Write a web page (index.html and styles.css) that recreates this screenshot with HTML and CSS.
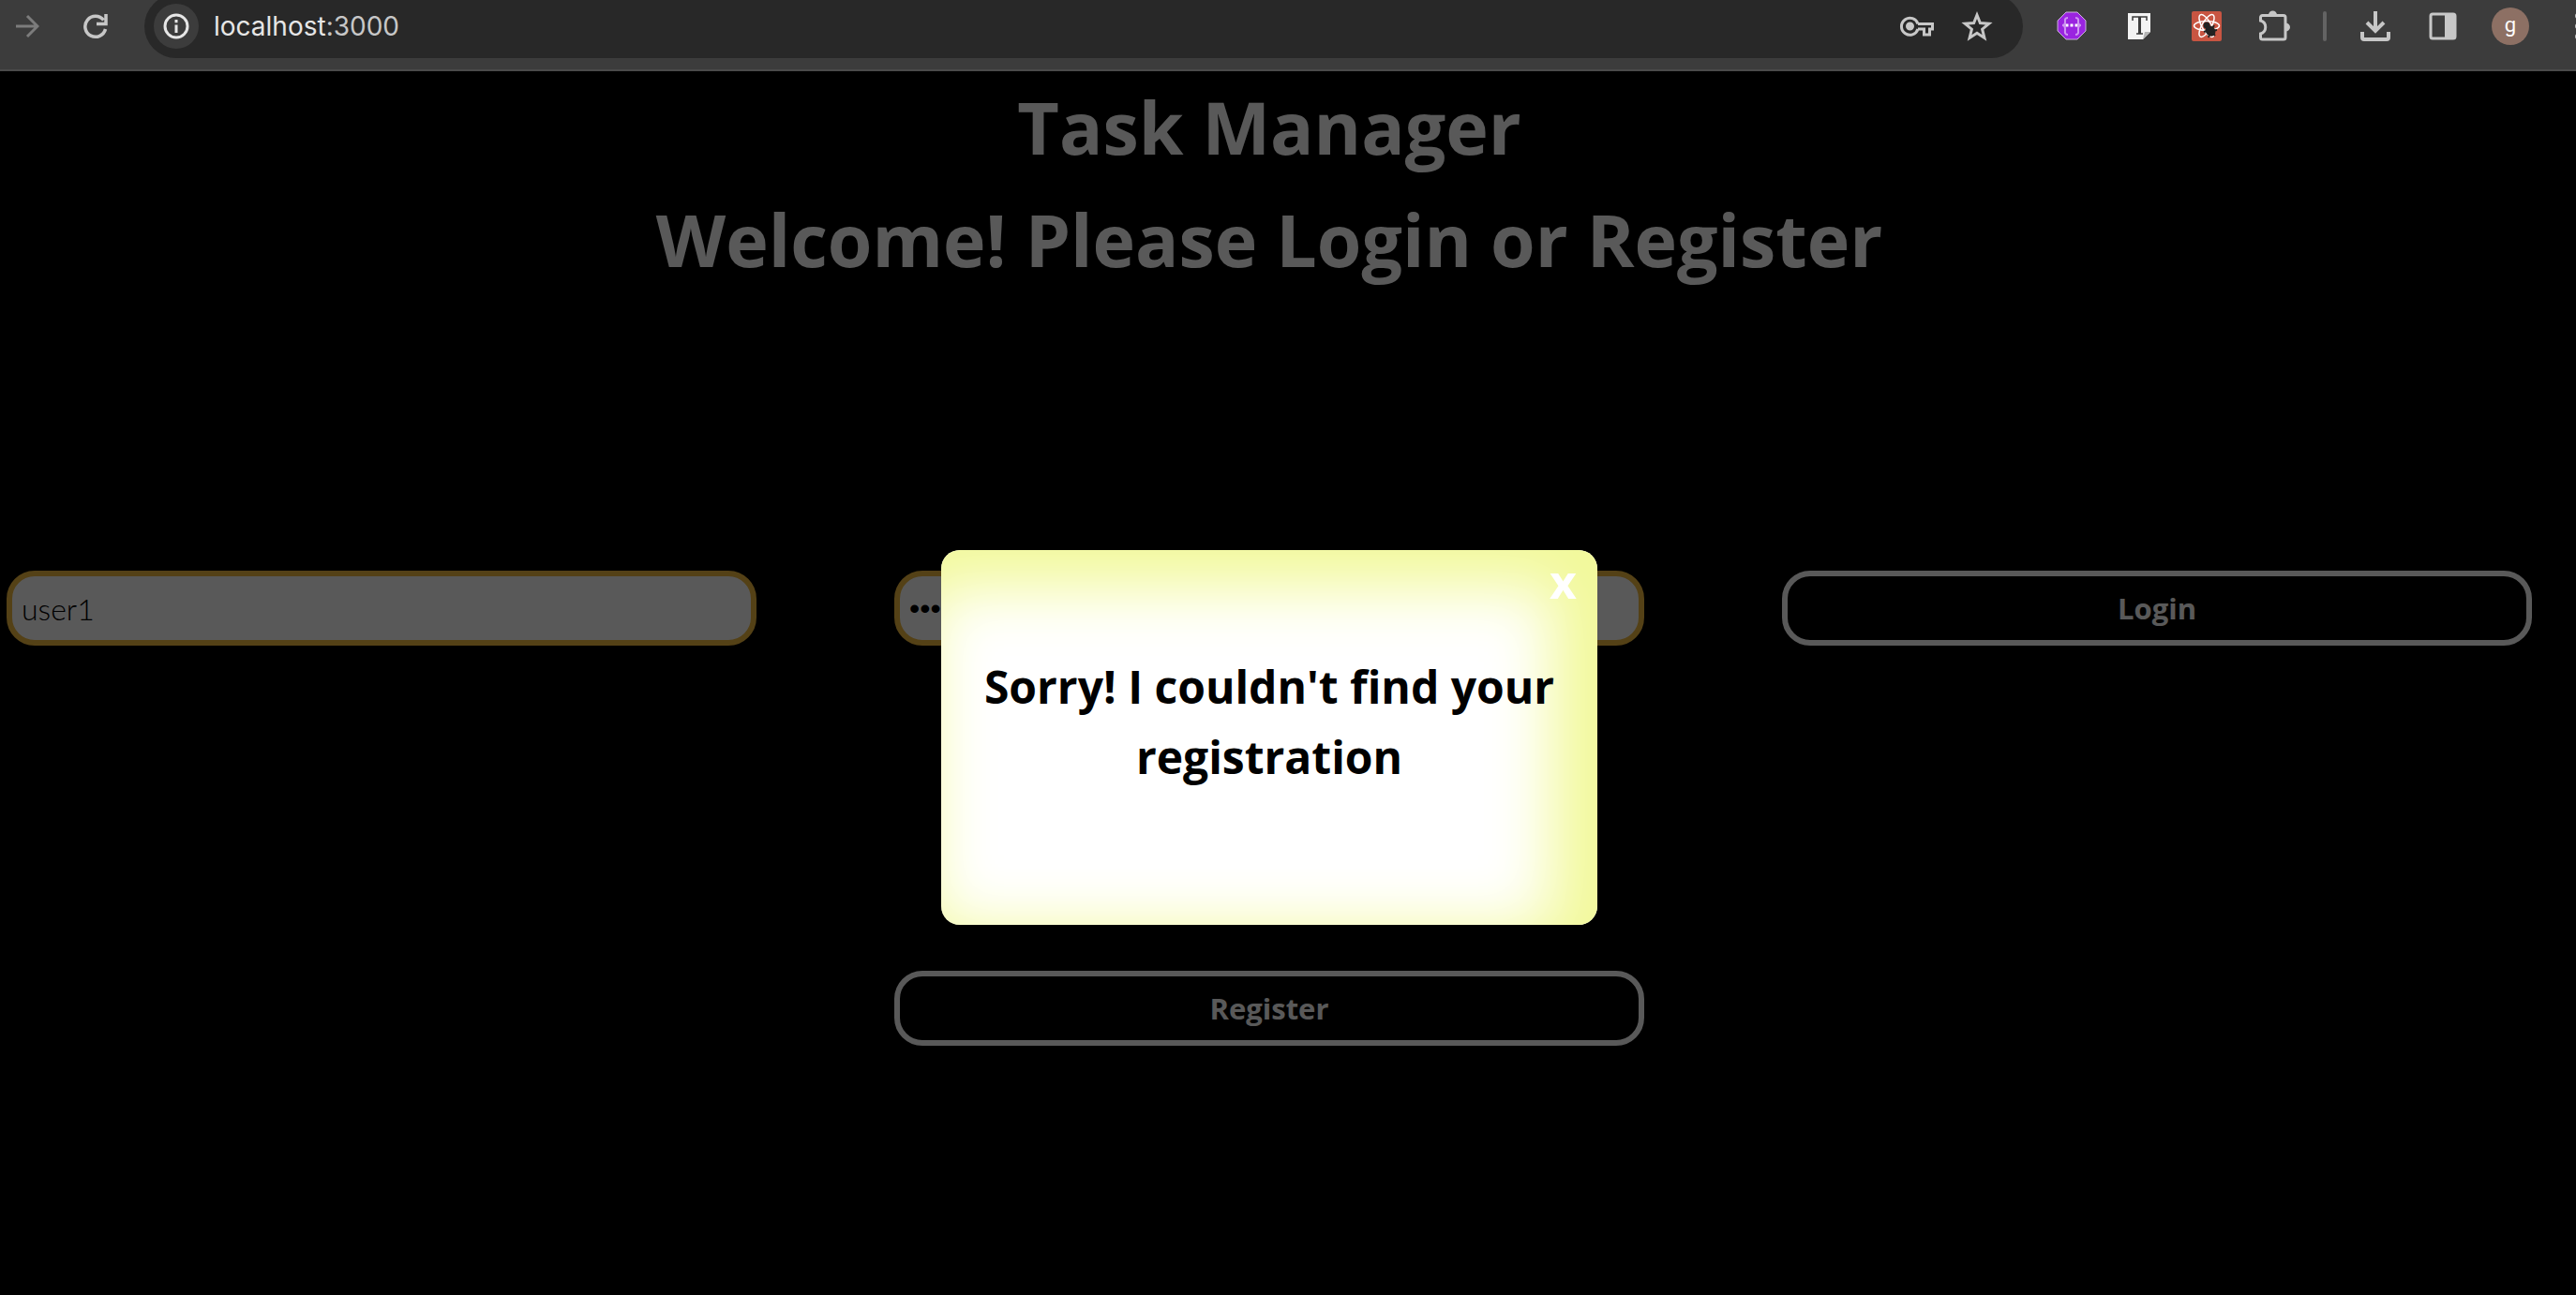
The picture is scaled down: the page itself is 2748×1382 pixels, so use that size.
FILE: index.html
```html
<!DOCTYPE html>
<html lang="en">
<head>
<meta charset="utf-8">
<title>Task Manager</title>
<link rel="stylesheet" href="styles.css">
</head>
<body>
<header class="toolbar">
  <button class="icon-btn forward" aria-label="Forward"><svg width="26" height="26" viewBox="0 0 26 26" fill="none" stroke="#7c7c7c" stroke-width="3"><path d="M1 13h22M13 2l11 11-11 11"/></svg></button>
  <button class="icon-btn reload" aria-label="Reload"><svg width="28" height="28" viewBox="0 0 28 28" fill="none" stroke="#c7c7c7" stroke-width="3.500"><path d="M24.500 17A11 11 0 1 1 22.500 7.500M25 1v10.500H15"/></svg></button>
  <div class="omnibox">
    <button class="site-info" aria-label="Site information"><svg width="28" height="28" viewBox="0 0 28 28" fill="none" stroke="#e6e6e6" stroke-width="3"><circle cx="14" cy="14" r="12"/><path d="M14 12.500V21M14 7v3.300"/></svg></button>
    <span class="url">localhost<span class="port">:3000</span></span>
    <button class="icon-btn key" aria-label="Passwords"><svg width="38" height="24" viewBox="0 0 38 24" fill="none" stroke="#c7c7c7" stroke-width="3"><path d="M20 9.500h15.500v5.500h-3v6h-6v-6h-6.500M20 9.500A9 9 0 1 0 20 15"/><circle cx="11.500" cy="12" r="3.500" fill="#c7c7c7" stroke-width="2"/></svg></button>
    <button class="icon-btn" aria-label="Bookmark"><svg width="34" height="34" viewBox="0 0 34 34" fill="none" stroke="#c7c7c7" stroke-width="3"><path d="M17 5l3.400 8.500 9.400.7-7.200 6 2.300 9.200L17 24.300 9.100 29.400l2.300-9.200-7.200-6 9.400-.7z"/></svg></button>
  </div>
  <nav class="extensions">
    <button class="icon-btn" aria-label="Extension"><svg width="32" height="32" viewBox="0 0 32 32"><path d="M10 1h12l9 9v11l-9 9H10l-9-9V10z" fill="#9a24e0" stroke="#c9b3d8"/><path d="M12 7c-4 0-3 3-3 5s-1 3-3 3c2 0 3 1 3 4s-1 6 3 6M20 7c4 0 3 3 3 5s1 3 3 3c-2 0-3 1-3 4s1 6-3 6" fill="none" stroke="#cf95f2" stroke-width="2"/><path d="M9.500 15h3M14.500 15h3M19.500 15h3" stroke="#fff" stroke-width="3"/></svg></button>
    <button class="icon-btn" aria-label="Extension"><svg width="24" height="28" viewBox="0 0 24 28"><path d="M0 0h24v20l-8 8H0z" fill="#f3f3f3"/><path d="M24 20h-6l-2 8z" fill="#b5b5b5"/><path d="M5 8V4h15v4M9 22h7" fill="none" stroke="#3c3c3c" stroke-width="1.500"/><path d="M12.500 4v18" stroke="#3c3c3c" stroke-width="3"/></svg></button>
    <button class="icon-btn" aria-label="Extension"><svg width="32" height="32" viewBox="0 0 32 32"><rect width="32" height="32" rx="2" fill="#c85542"/><g fill="none" stroke="#fff" stroke-width="1.500"><ellipse cx="16" cy="15.500" rx="13.500" ry="5"/><ellipse cx="16" cy="15.500" rx="13.500" ry="5" transform="rotate(60 16 15.500)"/><ellipse cx="16" cy="15.500" rx="13.500" ry="5" transform="rotate(120 16 15.500)"/></g><g fill="#222" stroke="#222" stroke-width="2"><circle cx="16" cy="15" r="2.500"/><ellipse cx="20" cy="21" rx="4" ry="5" transform="rotate(-40 20 21)"/><path d="M13 22l6-2M18 28l2-6M24 15l-3 5M27 20l-6 1M25 26l-4-4" fill="none"/></g></svg></button>
    <button class="icon-btn" aria-label="Extensions"><svg width="34" height="34" viewBox="0 0 34 34"><path d="M2.500 11V7.500a2 2 0 0 1 2-2H27a2 2 0 0 1 2 2V29a2 2 0 0 1-2 2H4.500a2 2 0 0 1-2-2v-4c7-2 7-12 0-14z" fill="none" stroke="#c7c7c7" stroke-width="3"/><path d="M11 5a4.500 4.500 0 0 1 9 0zM29 13.500a5 4.500 0 0 1 0 9z" fill="#c7c7c7"/></svg></button>
    <span class="divider"></span>
    <button class="icon-btn" aria-label="Downloads"><svg width="32" height="32" viewBox="0 0 32 32" fill="none" stroke="#c7c7c7" stroke-width="4"><path d="M16 0v21M7 12l9 9 9-9M2 22v6q0 2 2 2h24q2 0 2-2v-6"/></svg></button>
    <button class="icon-btn" aria-label="Side panel"><svg width="30" height="30" viewBox="0 0 30 30"><rect x="2" y="2" width="26" height="26" rx="2" fill="none" stroke="#c7c7c7" stroke-width="3"/><path d="M17 1h10v28H17z" fill="#c7c7c7"/></svg></button>
    <button class="icon-btn" aria-label="Profile"><span class="avatar">g</span></button>
    <button class="icon-btn menu" aria-label="Menu"><svg width="6" height="28" viewBox="0 0 6 28" fill="#c7c7c7"><circle cx="3" cy="3" r="3"/><circle cx="3" cy="14" r="3"/><circle cx="3" cy="25" r="3"/></svg></button>
  </nav>
</header>
<main class="page">
  <h1 class="title">Task Manager</h1>
  <h1 class="title">Welcome! Please Login or Register</h1>
  <form class="login">
    <input class="field" type="text" aria-label="Username" value="user1">
    <input class="field password" type="password" aria-label="Password" value="password">
    <button class="btn" type="button">Login</button>
    <button class="btn register" type="button">Register</button>
  </form>
  <div class="overlay">
    <div class="modal" role="dialog" aria-modal="true" aria-labelledby="message">
      <button class="close" aria-label="Close">x</button>
      <h2 class="message" id="message">Sorry! I couldn't find your registration</h2>
    </div>
  </div>
</main>
</body>
</html>
```
FILE: styles.css
```css
* {
  box-sizing: border-box;
}

body {
  margin: 0;
  min-height: 100vh;
  display: flex;
  flex-direction: column;
  background: #000;
  font-family: "Open Sans", sans-serif;
  font-variant-ligatures: none;
  overflow: hidden;
}

button {
  margin: 0;
  padding: 0;
  border: 0;
  background: none;
  font-family: inherit;
}

svg {
  flex: none;
}

/* Browser toolbar */
.toolbar {
  display: flex;
  align-items: flex-start;
  height: 76px;
  padding-left: 16px;
  background: #3c3c3c;
  border-bottom: 2px solid #4a4a4a;
}

.icon-btn {
  display: flex;
  flex: none;
  align-items: center;
  justify-content: center;
  height: 56px;
}

.reload {
  margin: 0 38px 0 46px;
}

.omnibox {
  display: flex;
  flex: 1;
  align-items: flex-start;
  height: 68px;
  margin-top: -6px;
  padding: 6px 32px 0 10px;
  border-radius: 34px;
  background: #282828;
}

.site-info {
  display: flex;
  align-items: center;
  justify-content: center;
  width: 48px;
  height: 48px;
  margin-top: 4px;
  border-radius: 50%;
  background: #3c3c3c;
}

.url {
  flex: 1;
  padding-left: 16px;
  font-family: "Inter", sans-serif;
  font-size: 28px;
  line-height: 56px;
  color: #e6e6e6;
}

.port {
  color: #c7c7c7;
}

.key {
  margin-right: 28px;
}

.extensions {
  display: flex;
  align-items: center;
  height: 56px;
  padding-left: 16px;
  overflow: hidden;
}

.extensions .icon-btn {
  width: 72px;
}

.divider {
  width: 4px;
  height: 32px;
  margin: 0 16px;
  border-radius: 2px;
  background: #636363;
}

.avatar {
  width: 40px;
  height: 40px;
  border-radius: 50%;
  background: #8d7064;
  color: #fff;
  font-family: "Roboto", sans-serif;
  font-size: 22px;
  line-height: 38px;
}

.extensions .menu {
  justify-content: flex-start;
  width: 34px;
  padding-left: 33px;
}

/* Login page */
.page {
  position: relative;
  flex: 1;
  padding-right: 40px;
}

.title {
  margin: 0;
  color: #fff;
  font-size: 77px;
  line-height: 120px;
  font-weight: 700;
  text-align: center;
}

.login {
  display: grid;
  grid-template-columns: repeat(3, 1fr);
  column-gap: 147px;
  row-gap: 347px;
  padding: 293px 7px 0;
}

.field,
.btn {
  width: 100%;
  height: 80px;
  border: 6px solid #fff;
  border-radius: 30px;
  font-size: 32px;
}

.field {
  padding: 0 10px;
  border-color: #f0b93f;
  background: #fff;
  color: #000;
  font-family: "Lato", sans-serif;
  font-weight: 300;
}

.password {
  font-family: "Liberation Sans", sans-serif;
}

.btn {
  color: #fff;
  font-size: 31px;
  font-weight: 700;
}

.register {
  grid-column: 2;
}

/* Dialog */
.overlay {
  position: absolute;
  inset: 0;
  display: flex;
  align-items: flex-start;
  justify-content: center;
  padding: 511px 40px 0 0;
  background: rgba(0, 0, 0, 0.65);
}

.modal {
  position: relative;
  width: 700px;
  min-height: 400px;
  padding: 108px 20px 0;
  border-radius: 20px;
  background: #fff;
  box-shadow: inset -30px 22px 66px 18px #f2f99a;
}

.close {
  position: absolute;
  top: 8px;
  right: 22px;
  color: #fff;
  font-size: 50px;
  line-height: 50px;
  font-weight: 700;
}

.message {
  margin: 0;
  color: #000;
  font-size: 48px;
  line-height: 75px;
  font-weight: 700;
  text-align: center;
}
```
